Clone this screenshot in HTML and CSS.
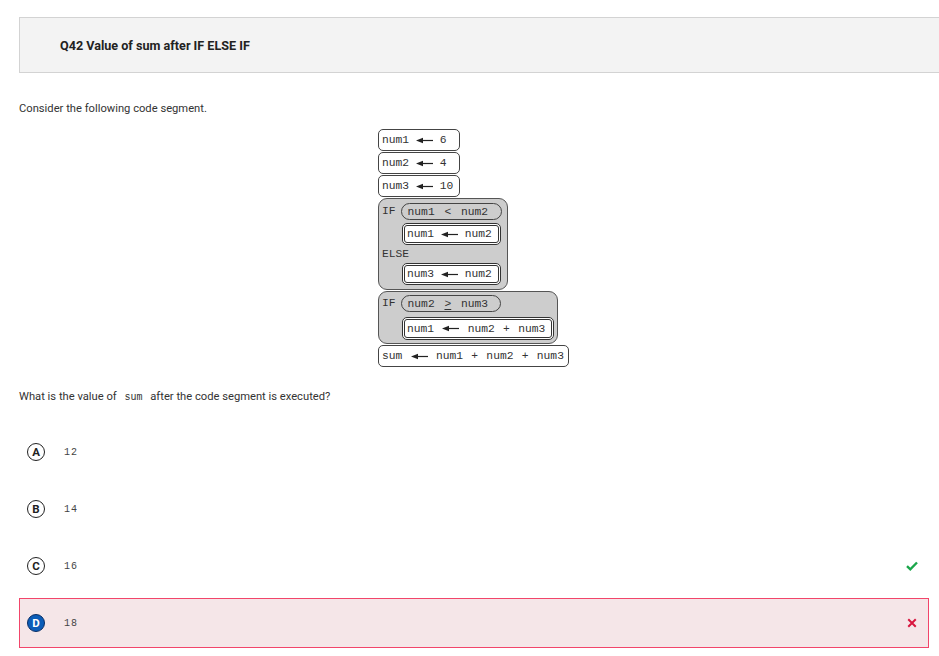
FILE: index.html
```html
<!DOCTYPE html>
<html>
<head>
<meta charset="utf-8">
<link rel="stylesheet" href="styles.css">
</head>
<body>
<div class="page">
  <div class="header"><h1 class="title">Q42 Value of sum after IF ELSE IF</h1></div>
  <p class="text intro">Consider the following code segment.</p>

  <div class="diagram-wrap">
    <div class="diagram">
      <div class="stmt w1">num1 <svg class="arrow" viewBox="0 0 17 7"><polygon points="0,3.5 7,0.8 7,6.2" /><rect x="6" y="2.9" width="11" height="1.2"/></svg> 6</div>
      <div class="stmt w1">num2 <svg class="arrow" viewBox="0 0 17 7"><polygon points="0,3.5 7,0.8 7,6.2" /><rect x="6" y="2.9" width="11" height="1.2"/></svg> 4</div>
      <div class="stmt w1">num3 <svg class="arrow" viewBox="0 0 17 7"><polygon points="0,3.5 7,0.8 7,6.2" /><rect x="6" y="2.9" width="11" height="1.2"/></svg> 10</div>
      <div class="ifblock b1">
        <div class="cond"><span class="kw">IF</span><span class="pill">num1 &lt; num2</span></div>
        <div class="inner w-in1">num1 <svg class="arrow" viewBox="0 0 17 7"><polygon points="0,3.5 7,0.8 7,6.2" /><rect x="6" y="2.9" width="11" height="1.2"/></svg> num2</div>
        <div class="kw else">ELSE</div>
        <div class="inner w-in1">num3 <svg class="arrow" viewBox="0 0 17 7"><polygon points="0,3.5 7,0.8 7,6.2" /><rect x="6" y="2.9" width="11" height="1.2"/></svg> num2</div>
      </div>
      <div class="ifblock b2">
        <div class="cond"><span class="kw">IF</span><span class="pill">num2 <span class="ge">&gt;</span> num3</span></div>
        <div class="inner w-in3 spaced">num1 <svg class="arrow" viewBox="0 0 17 7"><polygon points="0,3.5 7,0.8 7,6.2" /><rect x="6" y="2.9" width="11" height="1.2"/></svg> num2 + num3</div>
      </div>
      <div class="stmt wsum spaced">sum <svg class="arrow" viewBox="0 0 17 7"><polygon points="0,3.5 7,0.8 7,6.2" /><rect x="6" y="2.9" width="11" height="1.2"/></svg> num1 + num2 + num3</div>
    </div>
  </div>

  <p class="text question">What is the value of <code class="code">sum</code> after the code segment is executed?</p>

  <div class="options">
    <div class="option">
      <span class="letter">A</span><span class="answer">12</span>
    </div>
    <div class="option">
      <span class="letter">B</span><span class="answer">14</span>
    </div>
    <div class="option">
      <span class="letter">C</span><span class="answer">16</span>
      <svg class="mark" viewBox="0 0 12 10"><path d="M1 5.2 L4.3 8.3 L11 1.5" fill="none" stroke="#1ba64b" stroke-width="2.4"/></svg>
    </div>
    <div class="option wrong">
      <span class="letter filled">D</span><span class="answer">18</span>
      <svg class="mark" viewBox="0 0 12 12"><path d="M1.5 1.5 L10.5 10.5 M10.5 1.5 L1.5 10.5" fill="none" stroke="#d8173f" stroke-width="2.4"/></svg>
    </div>
  </div>
</div>
</body>
</html>
```

FILE: styles.css
```css
* { box-sizing: border-box; }
html, body { margin: 0; padding: 0; background: #fff; }
body { font-family: Roboto, "Liberation Sans", Arial, sans-serif; color: #333; overflow: hidden; }

.page { padding: 17px 10px 0 19px; }

.header {
  height: 56px;
  margin-right: -30px;
  background: #f3f3f3;
  border: 1px solid #d3d3d3;
  display: flex;
  align-items: center;
  padding-left: 40px;
}
.title { margin: 0; font-size: 12.6px; font-weight: 700; color: #222; }

.text { margin: 0; font-size: 11.2px; line-height: 16px; color: #333; }
.intro { margin-top: 28px; }

.diagram-wrap { margin-top: 12px; padding-left: 359px; }
.diagram {
  display: flex; flex-direction: column; align-items: flex-start;
  font-family: "Liberation Mono", "Courier New", monospace;
  font-size: 11.3px; color: #333; white-space: pre;
}
.arrow { width: 17px; height: 7px; fill: #222; vertical-align: 1px; }
.spaced { word-spacing: 1.5px; }

.stmt {
  height: 22px; margin-bottom: 1px;
  border: 1px solid #444; border-radius: 5px; background: #fff;
  padding-left: 3px; display: flex; align-items: center;
}
.w1 { width: 82px; }
.wsum { width: 191px; margin-bottom: 0; margin-top: 1px; }

.ifblock {
  background: #cdcdcd; border: 1px solid #555; border-radius: 9px;
  padding: 4px 0 4px 3px; display: flex; flex-direction: column; align-items: flex-start;
}
.b1 { width: 130px; margin-bottom: 1px; }
.b2 { width: 180px; padding-top: 3px; padding-bottom: 3px; }
.cond { display: flex; align-items: center; height: 17px; }
.kw { line-height: 17px; }
.pill {
  margin-left: 5px; width: 101px; height: 17px;
  border: 1px solid #444; border-radius: 9px;
  padding-left: 6px; display: flex; align-items: center;
  word-spacing: 3px;
}
.b2 .pill { width: 100px; }
.ge { text-decoration: underline; text-underline-offset: 2px; }
.inner {
  margin-left: 20px; margin-top: 3px; height: 22px;
  border: 3px double #333; border-radius: 5px; background: #fff;
  padding-left: 2px; display: flex; align-items: center;
}
.b2 .inner { margin-top: 5px; height: 23px; }
.w-in1 { width: 99px; }
.w-in3 { width: 152px; }
.else { height: 18px; line-height: 18px; margin-top: 0; }
.else + .inner { margin-top: 0; }

.question { margin-top: 22px; }
.code { font-family: "Liberation Mono", "Courier New", monospace; font-size: 10px; padding: 0 5px; color: #333; }

.options { margin-top: 21px; display: flex; flex-direction: column; gap: 7px; }
.option {
  height: 50px; display: flex; align-items: center;
  border: 1px solid transparent; padding-left: 7px; padding-right: 10px;
}
.letter {
  width: 18px; height: 18px; border-radius: 50%;
  border: 1.3px solid #222; color: #222;
  font-size: 11.5px; font-weight: 700;
  display: flex; align-items: center; justify-content: center;
}
.letter.filled { background: #0b5db8; color: #fff; border-color: #0a2f66; }
.answer {
  margin-left: 19px; font-family: "Liberation Mono", "Courier New", monospace;
  font-size: 10px; letter-spacing: 1px; color: #444;
}
.mark { margin-left: auto; width: 12px; height: 10px; }
.wrong .mark { width: 10px; height: 10px; margin-right: 1px; }
.wrong { background: #f5e6e8; border-color: #f2456a; }
```
